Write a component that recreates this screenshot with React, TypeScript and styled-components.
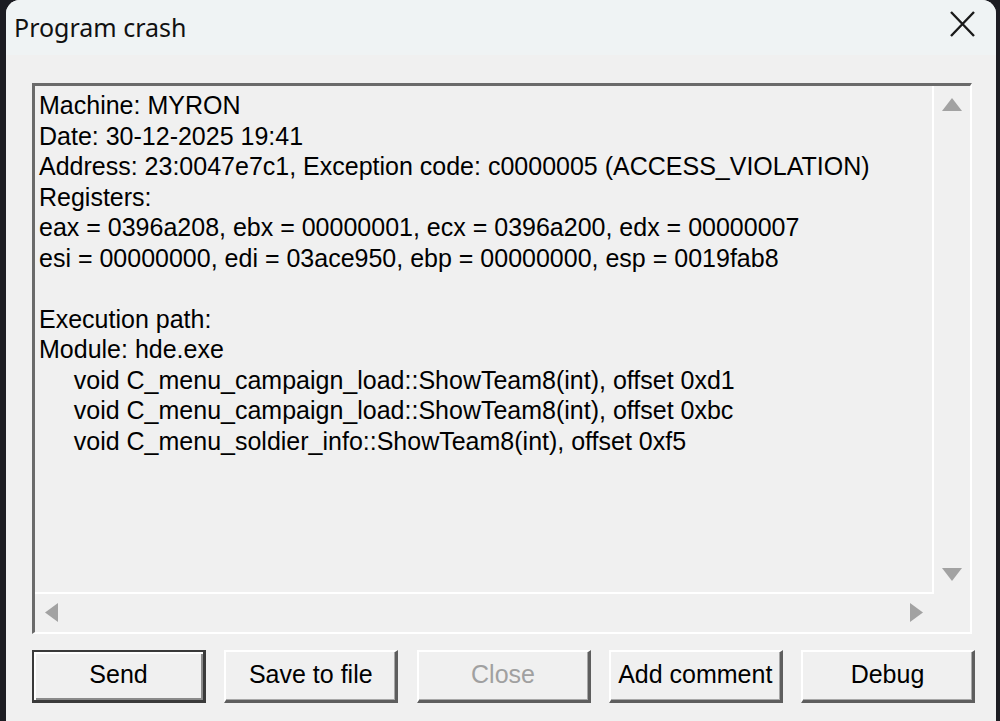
import styled, { createGlobalStyle } from 'styled-components';

const GlobalStyle = createGlobalStyle`
  html, body {
    margin: 0;
    padding: 0;
    background: #1c1c22;
    overflow: hidden;
  }
`;

const Window = styled.div`
  margin-left: 6px;
  width: 990px;
  height: 760px;
  background: #f0f0f0;
  border-radius: 14px 14px 0 0;
  overflow: hidden;
  display: flex;
  flex-direction: column;
`;

const TitleBar = styled.div`
  height: 55px;
  background: #eff3f4;
  display: flex;
  align-items: center;
  justify-content: space-between;
  padding: 0 21px 0 8px;
  flex-shrink: 0;
`;

const Title = styled.span`
  font-family: 'Noto Sans', sans-serif;
  font-size: 25px;
  color: #111;
  margin-top: -2px;
`;

const CloseIcon = styled.svg`
  width: 25px;
  height: 26px;
  margin-top: -7px;
`;

const Body = styled.div`
  padding: 28px 20px 0 26px;
  display: flex;
  flex-direction: column;
`;

const LogBox = styled.div`
  width: 940px;
  height: 551px;
  box-sizing: border-box;
  border-style: solid;
  border-width: 3px 2px 2px 3px;
  border-color: #6a6a6a #ffffff #ffffff #6a6a6a;
  display: grid;
  grid-template-columns: 1fr 36px;
  grid-template-rows: 1fr 38px;
`;

const LogText = styled.pre`
  margin: 0;
  padding: 4px 0 0 4px;
  border-right: 2px solid #ffffff;
  border-bottom: 2px solid #ffffff;
  font-family: 'Liberation Sans', Arial, sans-serif;
  font-size: 25px;
  line-height: 30.55px;
  color: #000;
  white-space: pre;
  overflow: hidden;
`;

const VScroll = styled.div`
  display: flex;
  flex-direction: column;
  justify-content: space-between;
  align-items: center;
  padding: 11px 0 12px;
`;

const HScroll = styled.div`
  display: flex;
  justify-content: space-between;
  align-items: center;
  padding: 0 10px 2px 9px;
`;

const Arrow = styled.svg`
  display: block;
  fill: #a2a2a2;
`;

const ButtonRow = styled.div`
  margin-top: 16px;
  width: 943px;
  display: flex;
  justify-content: space-between;
`;

const Button = styled.button<{ $default?: boolean }>`
  width: 174px;
  height: 53px;
  box-sizing: border-box;
  background: #f0f0f0;
  font-family: 'Liberation Sans', Arial, sans-serif;
  font-size: 25px;
  color: ${(p) => (p.disabled ? '#a0a0a0' : '#000')};
  padding: 0 0 3px;
  border-style: solid;
  border-width: 2px 3px 3px 2px;
  border-color: ${(p) =>
    p.$default ? '#3a3a3a' : '#ffffff #5e5e5e #5e5e5e #ffffff'};
  box-shadow: ${(p) =>
    p.$default
      ? 'inset 2px 2px 0 #ffffff, inset -2px -2px 0 #8a8a8a'
      : 'inset -1px -1px 0 #a8a8a8'};
`;

const lines = [
  'Machine: MYRON',
  'Date: 30-12-2025 19:41',
  'Address: 23:0047e7c1, Exception code: c0000005 (ACCESS_VIOLATION)',
  'Registers:',
  'eax = 0396a208, ebx = 00000001, ecx = 0396a200, edx = 00000007',
  'esi = 00000000, edi = 03ace950, ebp = 00000000, esp = 0019fab8',
  '',
  'Execution path:',
  'Module: hde.exe',
  '     void C_menu_campaign_load::ShowTeam8(int), offset 0xd1',
  '     void C_menu_campaign_load::ShowTeam8(int), offset 0xbc',
  '     void C_menu_soldier_info::ShowTeam8(int), offset 0xf5',
];

const App = () => {
  return (
    <>
      <GlobalStyle />
      <Window>
        <TitleBar>
          <Title>Program crash</Title>
          <CloseIcon viewBox="0 0 25 26">
            <path d="M1 1 L24 25 M24 1 L1 25" stroke="#1a1a1a" strokeWidth="2.4" fill="none" />
          </CloseIcon>
        </TitleBar>
        <Body>
          <LogBox>
            <LogText>{lines.join('\n')}</LogText>
            <VScroll>
              <Arrow width="22" height="15" viewBox="0 0 22 15">
                <path d="M11 1 L21 14 L1 14 Z" />
              </Arrow>
              <Arrow width="22" height="15" viewBox="0 0 22 15">
                <path d="M1 1 L21 1 L11 14 Z" />
              </Arrow>
            </VScroll>
            <HScroll>
              <Arrow width="15" height="21" viewBox="0 0 15 21">
                <path d="M14 1 L14 20 L1 10.5 Z" />
              </Arrow>
              <Arrow width="15" height="21" viewBox="0 0 15 21">
                <path d="M1 1 L14 10.5 L1 20 Z" />
              </Arrow>
            </HScroll>
            <div />
          </LogBox>
          <ButtonRow>
            <Button $default>Send</Button>
            <Button>Save to file</Button>
            <Button disabled>Close</Button>
            <Button>Add comment</Button>
            <Button>Debug</Button>
          </ButtonRow>
        </Body>
      </Window>
    </>
  );
};

export default App;
